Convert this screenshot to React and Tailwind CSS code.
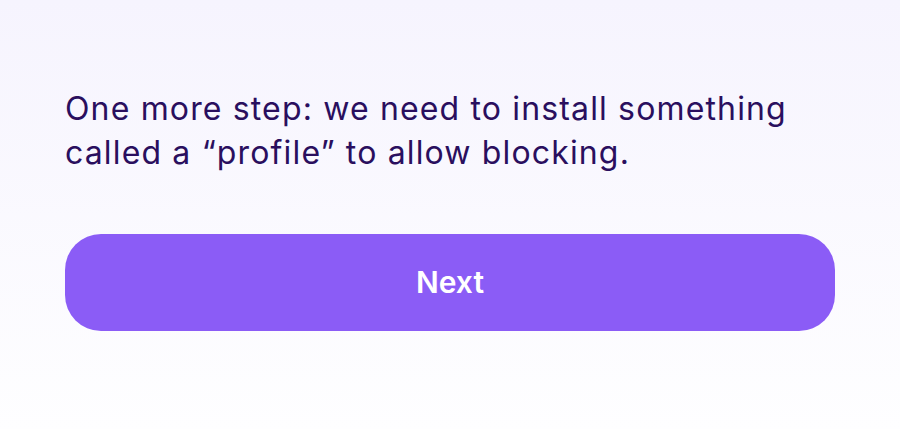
import React from "react";

const App = () => {
  return (
    <div
      className="w-[900px] h-[429px] bg-gradient-to-b from-[#f6f4fe] to-[#fefeff] px-[65px] pt-[87px] flex flex-col"
      style={{ fontFamily: "Inter, 'Noto Sans', sans-serif" }}
    >
      <p className="max-w-[740px] text-[32px] leading-[44px] text-[#2a0f5e] font-normal tracking-[1.15px]">
        One more step: we need to install something called a “profile” to allow blocking.
      </p>
      <button className="mt-[59px] w-full h-[97px] rounded-[36px] bg-[#8b5cf6] text-white text-[30px] font-semibold">
        Next
      </button>
    </div>
  );
};

export default App;
